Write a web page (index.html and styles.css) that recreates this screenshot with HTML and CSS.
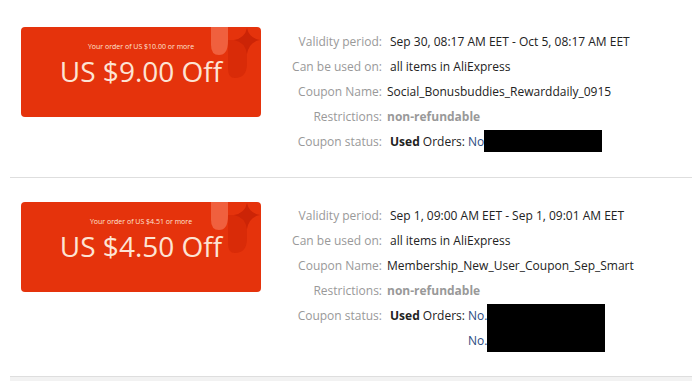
FILE: index.html
```html
<!DOCTYPE html>
<html>
<head>
<meta charset="utf-8">
<link rel="stylesheet" href="styles.css">
</head>
<body>
<div class="list">
  <div class="row">
    <div class="coupon">
      <svg class="deco" viewBox="0 0 50 55" width="50" height="55">
        <path d="M0 0 H17 V14 Q17 28 8 28 Q0 28 0 18 Z" fill="#f0603e"/>
        <path d="M17 13 H36 V36 Q36 51 24 51 Q17 51 17 42 Z" fill="#d92b08"/>
        <path d="M36 1 Q38 11 49 13 Q38 15 36 27 Q34 15 23 13 Q34 11 36 1 Z" fill="#cc2406"/>
      </svg>
      <div class="cond">Your order of US $10.00 or more</div>
      <div class="amount">US $9.00 Off</div>
    </div>
    <div class="details">
      <div class="line"><span class="label">Validity period:</span><span class="value sp">Sep 30, 08:17 AM EET - Oct 5, 08:17 AM EET</span></div>
      <div class="line"><span class="label">Can be used on:</span><span class="value sp">all items in AliExpress</span></div>
      <div class="line"><span class="label">Coupon Name:</span><span class="value">Social_Bonusbuddies_Rewarddaily_0915</span></div>
      <div class="line"><span class="label">Restrictions:</span><span class="value muted">non-refundable</span></div>
      <div class="line"><span class="label">Coupon status:</span><span class="value sp"><b>Used</b> Orders: <span class="orders"><span class="no">No</span><span class="redact one"></span></span></span></div>
    </div>
  </div>
  <div class="row">
    <div class="coupon">
      <svg class="deco" viewBox="0 0 50 55" width="50" height="55">
        <path d="M0 0 H17 V14 Q17 28 8 28 Q0 28 0 18 Z" fill="#f0603e"/>
        <path d="M17 13 H36 V36 Q36 51 24 51 Q17 51 17 42 Z" fill="#d92b08"/>
        <path d="M36 1 Q38 11 49 13 Q38 15 36 27 Q34 15 23 13 Q34 11 36 1 Z" fill="#cc2406"/>
      </svg>
      <div class="cond">Your order of US $4.51 or more</div>
      <div class="amount">US $4.50 Off</div>
    </div>
    <div class="details">
      <div class="line"><span class="label">Validity period:</span><span class="value sp">Sep 1, 09:00 AM EET - Sep 1, 09:01 AM EET</span></div>
      <div class="line"><span class="label">Can be used on:</span><span class="value sp">all items in AliExpress</span></div>
      <div class="line"><span class="label">Coupon Name:</span><span class="value">Membership_New_User_Coupon_Sep_Smart</span></div>
      <div class="line"><span class="label">Restrictions:</span><span class="value muted">non-refundable</span></div>
      <div class="line"><span class="label">Coupon status:</span><span class="value sp"><b>Used</b> Orders: <span class="orders"><span class="no">No.</span><span class="no">No.</span><span class="redact two"></span></span></span></div>
    </div>
  </div>
</div>
<div class="footer"></div>
</body>
</html>
```
FILE: styles.css
```css
html, body {
  margin: 0;
  padding: 0;
  background: #ffffff;
}
body {
  font-family: "Open Sans", "Liberation Sans", sans-serif;
  font-size: 12px;
  color: #222;
}
.list {
  padding-top: 3px;
}
.row {
  margin-left: 10px;
  padding: 24px 0 23px 11px;
  border-bottom: 1px solid #dedede;
  display: flex;
  align-items: flex-start;
}
.coupon {
  position: relative;
  width: 240px;
  height: 90px;
  box-sizing: border-box;
  padding-top: 15px;
  background: #e5330c;
  border-radius: 4px;
  overflow: hidden;
  text-align: center;
  color: #fde4d4;
  flex: none;
}
.deco {
  position: absolute;
  left: 190px;
  top: 0;
}
.cond {
  position: relative;
  font-size: 7px;
  line-height: 10px;
}
.amount {
  position: relative;
  font-size: 28px;
  line-height: 38px;
}
.details {
  margin-top: 1.5px;
  margin-left: 4px;
}
.line {
  display: flex;
  line-height: 25px;
  white-space: nowrap;
}
.label {
  width: 117px;
  text-align: right;
  color: #999;
  flex: none;
}
.value {
  margin-left: 5px;
  color: #222;
}
.value.sp {
  padding-left: 3px;
}
.value b {
  font-weight: 700;
  color: #222;
}
.muted {
  color: #999;
  font-weight: 700;
}
.orders {
  display: inline-grid;
  grid-template-columns: auto 118px;
  vertical-align: top;
}
.no {
  grid-column: 1;
  color: #2c4a80;
}
.redact {
  grid-column: 2;
  grid-row: 1;
  background: #000;
}
.redact.one {
  height: 22px;
  margin-top: 1px;
}
.redact.two {
  grid-row: 1 / span 2;
  height: 48px;
  margin-top: 1px;
}
.footer {
  margin-left: 10px;
  height: 10px;
  background: #f2f2f2;
}
```
